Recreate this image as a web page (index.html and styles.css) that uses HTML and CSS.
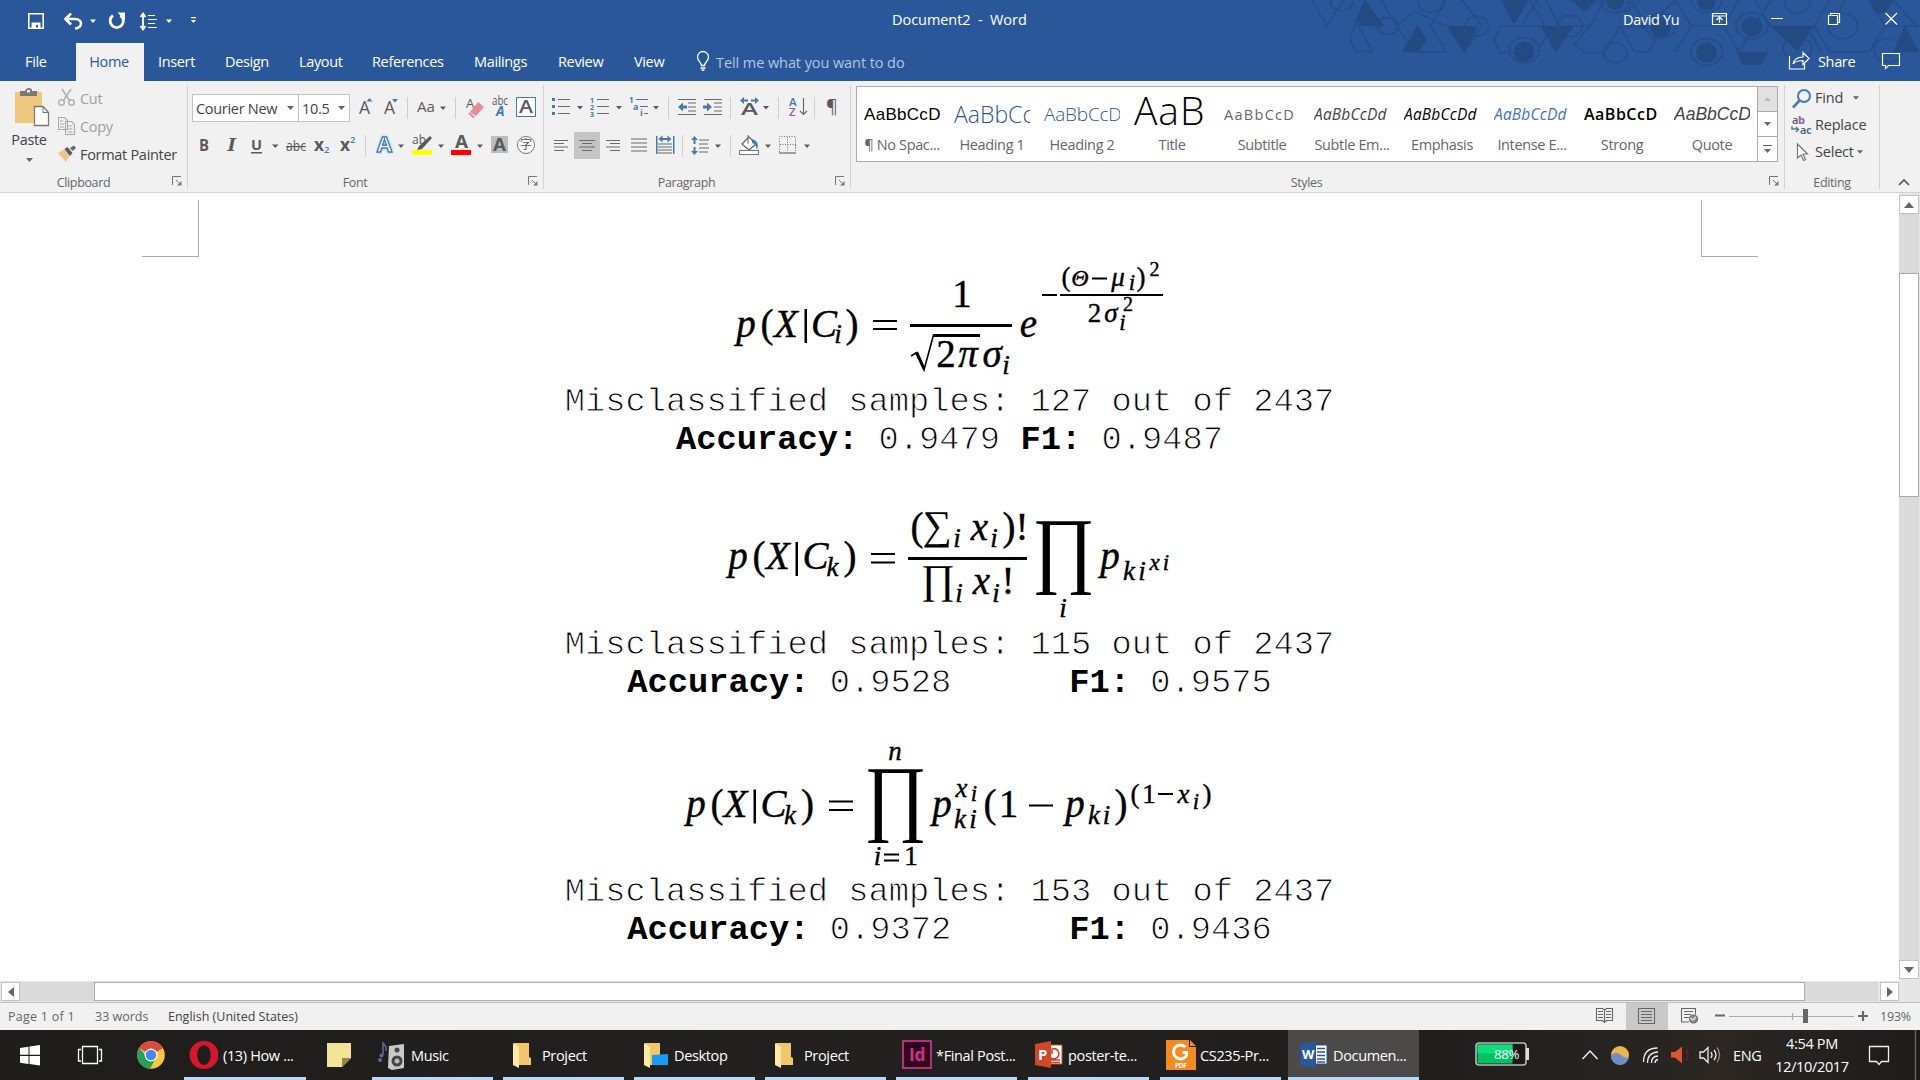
FILE: index.html
```html
<!DOCTYPE html>
<html lang="en">
<head>
<meta charset="utf-8">
<title>Document2 - Word</title>
<link rel="stylesheet" href="styles.css">
</head>
<body>
<svg class="defs" width="0" height="0">
  <symbol id="caret" viewBox="0 0 7 4"><path d="M0 0h7L3.5 4z"/></symbol>
  <symbol id="launch" viewBox="0 0 10 10"><path d="M.5 9V.5H9M4 4l4.500 4.500" fill="none" stroke="#777"/><path d="M9.500 5v4.500H5z" fill="#777"/></symbol>
  <symbol id="folder" viewBox="0 0 20 26"><path d="M1 1h15v14l2 1v7H5z" fill="#f0c869"/><path d="M0 1l6 4v21l-6-3z" fill="#ffe9a8"/></symbol>
</svg>

<header class="top">
  <svg class="pattern" viewBox="0 0 1568 243" preserveAspectRatio="none">
    <g class="pl">
      <path d="M30 0l38 78L110 0M165 0l-40 118 16 36h42l-35-76 35-42M205 0l40 78 40-40M245 78l45 78h80l-40-78M330 78L370 0M290 35l80 43M410 0l50 78-45 80M510 78h110L580 0M510 78l-20 40 15 40h45M620 0l38 78h75L770 0M560 78l40-78M600 155l40-78M733 78l-38 55 25 25h50l38-78 70 0-38-78M808 78l38 78h33l43-78M860 0l-40 40M950 0l-70 78M950 155l40-78 80 0 40 78M990 78L950 0M1070 78l40-78M1110 155l80-155M1190 78h110l40-78M1190 78l-40-78M1300 78l40 78h100l40-78 88 0M1340 78l40-78M1480 78L1440 0M1440 0l60 0 60 78M1320 156l-40-78"/>
      <circle cx="105" cy="5" r="28"/><circle cx="222" cy="78" r="26"/><circle cx="330" cy="5" r="32"/><circle cx="447" cy="78" r="30"/><circle cx="682" cy="78" r="32"/><circle cx="797" cy="158" r="30"/><circle cx="912" cy="78" r="38"/><circle cx="1028" cy="155" r="40"/><circle cx="1143" cy="78" r="40"/><circle cx="1258" cy="145" r="36"/><circle cx="1373" cy="78" r="38"/><circle cx="1488" cy="150" r="36"/><circle cx="797" cy="0" r="38"/><circle cx="1028" cy="0" r="38"/><circle cx="1258" cy="8" r="32"/><circle cx="567" cy="150" r="38"/>
    </g>
    <g class="pf">
      <path d="M165 0l48 78H155l-12-25zM298 75l22 43-20 38h-42zM370 78h80l-34 80zM508 0h70l-36 75zM608 78h86l-48 80zM685 0h68l-33 36zM850 40l30 38-15 10zM1190 78h110l-42 75zM1105 156h80l-18 38h-50zM1440 0h60l-18 38h-28zM1530 78l35 78h-66z"/>
      <ellipse cx="567" cy="155" rx="25" ry="30"/><ellipse cx="797" cy="3" rx="23" ry="26"/><ellipse cx="1028" cy="5" rx="23" ry="26"/><ellipse cx="1028" cy="158" rx="26" ry="30"/><ellipse cx="1143" cy="80" rx="26" ry="30"/><ellipse cx="912" cy="82" rx="26" ry="30"/>
    </g>
  </svg>
  <div class="titlebar">
    <svg width="220" height="36" viewBox="0 0 220 36" fill="none" stroke="#fff">
      <path d="M28.800 13.800h14.400v14.400H28.800z" stroke-width="1.600"/><path d="M31.500 22.500h9v6.500h-2.500v-4h-2v4h-4.500z" fill="#fff" stroke="none"/>
      <path d="M65 19h10c8 0 8 9 0 9.500" stroke-width="2.600"/><path d="M71 13.500l-5.500 5.500 5.500 5.500" stroke-width="2.600"/>
      <path d="M113 15.500a6.600 6.600 0 1 0 7.500 0" stroke-width="2.800"/><path d="M117.500 12.500h7.500v8z" fill="#fff" stroke="none"/>
      <path d="M143 14v15M140.500 17l2.500-3.500 2.500 3.500M140.500 26l2.500 3.500 2.500-3.500" stroke-width="1.800"/><path d="M148 15.500h7M148 19.500h9M148 23.500h7M148 27.500h9"/>
      <g fill="#fff" stroke="none"><path d="M90 19.500h6l-3 3.500zM166 19.500h6l-3 3.500zM191 17h5v1.200h-5zM191 20h5l-2.500 3z"/></g>
    </svg>
    <div class="doctitle">Document2&nbsp; -&nbsp; Word</div>
    <div class="user">David Yu</div>
    <svg width="220" height="36" viewBox="1700 0 220 36" fill="none" stroke="#fff" stroke-width="1.200">
      <path d="M1712.500 13.500h14v11h-14zM1712.500 16h14M1719.500 23v-5.500M1716.500 20l3-3 3 3M1771 18.500h12M1828.500 15.500h9v9h-9zM1830.500 15.500v-2h9v9h-2M1885.500 13l11.500 11.500M1897 13l-11.500 11.500"/>
    </svg>
  </div>
  <nav class="tabs">
    <a class="file">File</a><a class="home">Home</a><a class="t3">Insert</a><a class="t4">Design</a><a class="t5">Layout</a><a class="t6">References</a><a class="t7">Mailings</a><a class="t8">Review</a><a class="t9">View</a>
    <svg width="20" height="22" viewBox="0 0 20 22" fill="none" stroke="#fff" stroke-width="1.300"><path d="M6.500 15.500c0-3-4-4-4-8.500a5.500 5.500 0 0 1 11 0c0 4.500-4 5.500-4 8.500zM5.500 18h5M6.500 20h3"/></svg>
    <a class="tell">Tell me what you want to do</a>
    <svg width="24" height="22" viewBox="1788 51 24 22" fill="none" stroke="#fff" stroke-width="1.200"><path d="M1789.500 57v13h15v-5M1793 65c1-5 4-7 10-7v-4.500l6 6-6 6v-4c-5 0-8 1-10 3.500z"/></svg>
    <a class="share">Share</a>
    <svg width="20" height="22" viewBox="1881 51 20 22" fill="none" stroke="#fff" stroke-width="1.200"><path d="M1882.500 54.500h17v12h-11l-3 3v-3h-3z"/></svg>
  </nav>
</header>

<section class="ribbon">
  <div class="group clip">
    <div class="body">
      <div class="paste">
        <svg width="36" height="40" viewBox="14 88 36 40"><rect x="15" y="93" width="27" height="31" fill="#edc87e"/><path d="M20 97v-5h5q1-3 4-3t3 3h5v5z" fill="#777"/><rect x="27" y="91" width="3" height="2.500" fill="#f1f1f1"/><path d="M34.500 107.500h8.500l5.500 6v13h-14z" fill="#fff" stroke="#777" stroke-width="1.300"/><path d="M43 107.500v6h5.500" fill="none" stroke="#777"/></svg>
        <span>Paste</span>
        <svg width="7" height="4" fill="#666"><use href="#caret"/></svg>
      </div>
      <ul class="cmds">
        <li class="off"><svg width="18" height="20" viewBox="0 0 18 20" fill="none" stroke="#b3b3b3" stroke-width="1.600"><circle cx="3.500" cy="14.500" r="2.800"/><circle cx="13.500" cy="14.500" r="2.800"/><path d="M4 1l7.500 11.500M13 1L5.500 12.500"/></svg>Cut</li>
        <li class="off"><svg width="18" height="20" viewBox="0 0 18 20" fill="#f1f1f1" stroke="#a9a9a9" stroke-width="1.100"><path d="M.5 1.500h6l3 3v9h-9zM7.500 5.500h6l3 3v10h-9z"/><path d="M2 5h3M2 8h4M2 11h4M9.500 10h5M9.500 13h5M9.500 16h5"/></svg>Copy</li>
        <li><svg width="18" height="20" viewBox="0 0 18 20"><path d="M0 9l7-4 5 6-4 7z" fill="#ecc68a"/><path d="M6.500 5l3-2 5 6-2.500 3z" fill="#5a5a5a"/><path d="M12 4l4-2.500 2 2.500-3.500 3z" fill="#666"/></svg>Format Painter</li>
      </ul>
    </div>
    <div class="foot"><span>Clipboard</span><svg width="10" height="10"><use href="#launch"/></svg></div>
  </div>

  <div class="group font">
    <div class="row r1">
      <div class="combo name">Courier New<svg width="7" height="4"><use href="#caret"/></svg></div>
      <div class="combo size">10.5<svg width="7" height="4"><use href="#caret"/></svg></div>
      <svg width="192" height="28" viewBox="351 94 192 28" class="gl">
        <text x="359" y="114" font-size="17.500">A</text><path class="b" d="M366.500 101.500h6l-3-3.500z"/><text x="384" y="114" font-size="17.500">A</text><path class="b" d="M392 99h6l-3 3.500z"/>
        <path class="sp" d="M407.500 97v22M455.500 97v22"/><text x="417" y="112" font-size="15" textLength="18" lengthAdjust="spacingAndGlyphs">Aa</text><path d="M440 106.500h6l-3 3.500z"/>
        <text x="466" y="108" font-size="13">A</text><path d="M470 112l8-10 6 5-8 9z" fill="#e8899a"/><path d="M469 113l5 4.500" stroke="#e8899a" stroke-width="2"/>
        <text x="492" y="105" font-size="12" textLength="16" lengthAdjust="spacingAndGlyphs">abc</text><text x="496" y="116" font-size="13.500" class="b" font-weight="700" font-style="italic">A</text>
        <rect x="516.500" y="97.500" width="19" height="19" fill="#fff" stroke="#4479b3"/><text x="519" y="113" font-size="18" font-weight="600" textLength="14" lengthAdjust="spacingAndGlyphs">A</text>
      </svg>
    </div>
    <div class="row r2">
      <svg width="351" height="28" viewBox="192 132 351 28" class="gl">
        <text x="199" y="151" font-size="16" font-weight="700" textLength="10" lengthAdjust="spacingAndGlyphs">B</text><text x="227" y="151" font-size="18" font-weight="700" class="serif" font-style="italic" textLength="9" lengthAdjust="spacingAndGlyphs">I</text><text x="251" y="150" font-size="15" font-weight="700" textLength="11" lengthAdjust="spacingAndGlyphs">U</text><path d="M251 152h11v1.500h-11zM272 144.500h6.500l-3.200 3.500z"/>
        <text x="286" y="151" font-size="14" textLength="20" lengthAdjust="spacingAndGlyphs">abc</text><path d="M286 146h20v1.200h-20z"/>
        <text x="314" y="151" font-size="17" font-weight="700" textLength="10" lengthAdjust="spacingAndGlyphs">x</text><text x="324" y="153" font-size="9.500" class="b" font-weight="600">2</text><text x="340" y="151" font-size="17" font-weight="700" textLength="10" lengthAdjust="spacingAndGlyphs">x</text><text x="350" y="143" font-size="9.500" class="b" font-weight="600">2</text>
        <path class="sp" d="M365.500 135v22"/><text x="377" y="152" font-size="21" font-weight="700" textLength="15" lengthAdjust="spacingAndGlyphs" class="fx">A</text><path d="M398 144.500h6l-3 3.500z"/>
        <text x="412" y="144" font-size="13" textLength="14" lengthAdjust="spacingAndGlyphs">ab</text><path d="M430 136l2 2-10 11-5 1 2-4z"/><rect x="412" y="150" width="20" height="5" fill="#ff0"/><path d="M438 144.500h6l-3 3.500z"/>
        <text x="455" y="148" font-size="17" font-weight="700" textLength="13" lengthAdjust="spacingAndGlyphs">A</text><rect x="451" y="150" width="20" height="5" fill="red"/><path d="M477 144.500h6l-3 3.500z"/>
        <rect x="491" y="136" width="17" height="17" fill="#bdbdbd"/><text x="493" y="151" font-size="18" font-weight="700" textLength="13" lengthAdjust="spacingAndGlyphs">A</text>
        <circle cx="526" cy="145" r="8.500" fill="#fff" stroke="#777"/><text x="520" y="149" font-size="12" class="cjk">字</text>
      </svg>
    </div>
    <div class="foot"><span>Font</span><svg width="10" height="10"><use href="#launch"/></svg></div>
  </div>

  <div class="group para">
    <div class="row r1">
      <svg width="304" height="28" viewBox="544 94 304 28" class="gl">
        <g class="b"><rect x="552" y="98" width="3" height="3"/><rect x="552" y="105" width="3" height="3"/><rect x="552" y="112" width="3" height="3"/><text x="590" y="103" font-size="7" font-weight="700">1</text><text x="590" y="110" font-size="7" font-weight="700">2</text><text x="590" y="117" font-size="7" font-weight="700">3</text><text x="629" y="103" font-size="8" font-weight="700">1</text><text x="633" y="110" font-size="9" font-weight="700">a</text><text x="640" y="116" font-size="9" font-weight="700">i</text></g>
        <path class="ln" d="M558 99.500h12M558 106.500h12M558 113.500h12M597 99.500h12M597 106.500h12M597 113.500h12M636 99.500h12M640 106.500h8M644 113.500h4"/>
        <path d="M577 106h6l-3 3.500zM616 106h6l-3 3.500zM653 106h6l-3 3.500zM763 106h6l-3 3.500z"/>
        <path class="sp" d="M668.500 97v22M730.500 97v22M778.500 97v22M814.500 97v22"/>
        <path class="ln" d="M678 99.500h18M688 103h8M688 107h8M688 111h8M678 114.500h18M704 99.500h18M714 103h8M714 107h8M714 111h8M704 114.500h18"/>
        <path class="b" d="M678 107l5-4.500v3h4v3h-4v3zM712 107l-5-4.500v3h-4v3h4v3zM740 100.500l4-3.500v2.500h4v2h-4v2.500zM759 100.500l-4-3.500v2.500h-4v2h4v2.500z"/>
        <text x="741" y="115" font-size="15.500" font-weight="600" textLength="17" lengthAdjust="spacingAndGlyphs">A</text>
        <text x="789" y="106" font-size="11.500" class="b" font-weight="600">A</text><text x="789" y="116" font-size="11.500" font-weight="600" class="pu">Z</text><path class="ln" d="M803.500 98v16M800 111l3.500 3.500 3.500-3.500"/>
        <text x="826" y="113" font-size="18">¶</text>
      </svg>
    </div>
    <div class="row r2">
      <svg width="304" height="28" viewBox="544 132 304 28" class="gl">
        <rect x="574" y="132" width="26" height="27" fill="#c5c5c5"/>
        <path class="ln" d="M554 140.500h14M554 143.500h10M554 147h14M554 150.500h10M579 140.500h16M582 143.500h10M579 147h16M582 150.500h10M606 140.500h14M610 143.500h10M606 147h14M610 150.500h10M631 139h16M631 143h16M631 147h16M631 151h16M658 144h14M658 147h14M658 150h14M658 153h14M699 140h10M699 144h9M699 148h10M699 152h9"/>
        <path class="b" d="M656 136h1.500v18h-1.500zM673 136h1.500v18h-1.500zM658.500 139l4-3.500v2.500h5v-2.500l4 3.500-4 3.500V140h-5v2.500zM694.500 136l3.500 4h-2.500v4h-2v-4H691zM694.500 155l3.500-4h-2.500v-4h-2v4H691z"/>
        <path class="sp" d="M682.500 135v22M730.500 135v22"/><path d="M715 144.500h6l-3 3.500zM765 144.500h6l-3 3.500zM804 144.500h6l-3 3.500z"/>
        <path d="M742 144l7-7 7 7-7 6z" fill="#fff" stroke="#666" stroke-width="1.300"/><path d="M748 144v-9" stroke="#666"/><path class="b" d="M752 139q8 2 5 11-1-6-5-7z"/><rect x="739.500" y="150.500" width="19" height="4" fill="#fff" stroke="#777"/>
        <path d="M779.500 152v-15.500h16V152M787.500 137v15M780 144.500h16" fill="none" stroke="#777" stroke-dasharray="1 1.500"/><path class="ln" d="M779 153h17"/>
      </svg>
    </div>
    <div class="foot"><span>Paragraph</span><svg width="10" height="10"><use href="#launch"/></svg></div>
  </div>

  <div class="group styles">
    <div class="gallery">
      <div class="st"><b class="s1">AaBbCcD</b><span>¶ No Spac...</span></div>
      <div class="st"><b class="s2">AaBbCc</b><span>Heading 1</span></div>
      <div class="st"><b class="s3">AaBbCcD</b><span>Heading 2</span></div>
      <div class="st"><b class="s4">AaB</b><span>Title</span></div>
      <div class="st"><b class="s5">AaBbCcD</b><span>Subtitle</span></div>
      <div class="st"><b class="s6">AaBbCcDd</b><span>Subtle Em...</span></div>
      <div class="st"><b class="s7">AaBbCcDd</b><span>Emphasis</span></div>
      <div class="st"><b class="s8">AaBbCcDd</b><span>Intense E...</span></div>
      <div class="st"><b class="s9">AaBbCcD</b><span>Strong</span></div>
      <div class="st"><b class="s10">AaBbCcD</b><span>Quote</span></div>
      <div class="pager">
        <i class="dim"><svg width="7" height="4" viewBox="0 0 7 4"><path d="M0 4h7L3.500 0z" fill="#bbb"/></svg></i>
        <i><svg width="7" height="4" fill="#666"><use href="#caret"/></svg></i>
        <i><svg width="9" height="9" viewBox="0 0 9 9" fill="#666"><path d="M0 0h9v1H0zM1 4h7L4.500 8z"/></svg></i>
      </div>
    </div>
    <div class="foot"><span>Styles</span><svg width="10" height="10"><use href="#launch"/></svg></div>
  </div>

  <div class="group edit">
    <ul class="cmds">
      <li><svg width="24" height="22" viewBox="1791 86 24 22" fill="none" stroke="#4479b3" stroke-width="2"><circle cx="1804" cy="95" r="6"/><path d="M1799.500 99.500l-6.500 7" stroke-width="2.600"/></svg>Find<svg class="c1" width="6" height="4" fill="#666"><use href="#caret"/></svg></li>
      <li><svg width="24" height="22" viewBox="0 0 24 22" class="gl"><text x="1" y="10" font-size="11" font-weight="600">a</text><text x="7" y="10" font-size="11" font-weight="700" class="pu">b</text><text x="9" y="20" font-size="11" font-weight="600">a</text><text x="15" y="20" font-size="11" font-weight="700" class="b">c</text><path d="M1 12v3h6M5 13l2.500 2.500L5 18" fill="none" stroke="#4479b3" stroke-width="1.400"/></svg>Replace</li>
      <li><svg width="24" height="22" viewBox="0 0 24 22" fill="#fff" stroke="#777" stroke-width="1.200"><path d="M6.500 3v14l3.500-3 2.500 5.500 2-1-2.500-5.500h4.500z"/></svg>Select<svg class="c2" width="6" height="4" fill="#666"><use href="#caret"/></svg></li>
    </ul>
    <div class="foot"><span>Editing</span></div>
  </div>
  <svg class="collapse" width="12" height="8" viewBox="0 0 12 8" fill="none" stroke="#555" stroke-width="1.600"><path d="M1 7l5-5 5 5"/></svg>
</section>

<main class="workspace">
  <article class="page">
    <div class="marks"><i class="ml"></i><i class="mr"></i></div>

    <svg class="eq e1" viewBox="600 257 700 126">
      <g class="it"><text x="746" y="337">p</text><text x="786" y="337">X</text><text x="824" y="337">C</text><text x="838" y="343" class="sm">i</text><text x="968" y="367">π</text><text x="992" y="367">σ</text><text x="1006" y="374" class="sm">i</text><text x="1028.500" y="337">e</text><text x="1080" y="286" class="th">Θ</text><text x="1118" y="286" class="sm">μ</text><text x="1132" y="290" class="xi">i</text><text x="1111" y="322" class="sm">σ</text><text x="1122.500" y="330" class="xi">i</text></g>
      <g class="up"><text x="767" y="337">(</text><text x="852" y="337">)</text><text x="962" y="307">1</text><text x="946" y="367">2</text><text x="1066" y="286" class="sm">(</text><text x="1141" y="286" class="sm">)</text><text x="1154.500" y="276" class="xs">2</text><text x="1094.500" y="322" class="sm">2</text><text x="1128" y="311" class="xs">2</text></g>
      <path d="M804.500 309h2.500v34h-2.500zM873 320h24v2h-24zM873 328h24v2h-24zM910 324h102v3H910zM933 334h47v3H933zM1042 294h15v2h-15zM1060 294h103v2h-103zM1092 277.500h15v2h-15z"/>
      <path d="M911 356l5-3 8 17 9.500-35" fill="none" stroke="#000" stroke-width="1.600"/><path d="M915 353l3-1.500 6.500 15-1 4z"/>
    </svg>
    <p>Misclassified samples: 127 out of 2437</p>
    <p><strong>Accuracy:</strong> 0.9479 <strong>F1:</strong> 0.9487</p>

    <svg class="eq e2" viewBox="600 459 700 166.500">
      <g class="it"><text x="738" y="569">p</text><text x="778" y="569">X</text><text x="815.500" y="569">C</text><text x="832.500" y="576" class="sm">k</text><text x="957" y="547" class="sm">i</text><text x="979.500" y="540">x</text><text x="994" y="547" class="sm">i</text><text x="959" y="602" class="sm">i</text><text x="981.500" y="594">x</text><text x="996" y="602" class="sm">i</text><text x="1063" y="617" class="sm">i</text><text x="1110" y="569">p</text><text x="1129" y="580" class="sm">k</text><text x="1142" y="580" class="sm">i</text><text x="1154.500" y="570" class="xi">x</text><text x="1166" y="570" class="xi">i</text></g>
      <g class="up"><text x="759" y="569">(</text><text x="850" y="569">)</text><text x="917" y="540">(</text><text x="1009" y="540">)</text><text x="1022" y="540">!</text><text x="1008" y="594">!</text></g>
      <g class="op"><text x="937" y="539">∑</text><text x="938" y="593">∏</text><text x="1063.500" y="577" class="big" textLength="63" lengthAdjust="spacingAndGlyphs">∏</text></g>
      <path d="M795.500 542h2.500v34h-2.500zM871 553h24v2h-24zM871 561.500h24v2h-24zM908 557h119v3H908z"/>
    </svg>
    <p>Misclassified samples: 115 out of 2437</p>
    <p><strong>Accuracy:</strong> 0.9528<strong class="tab">F1:</strong> 0.9575</p>

    <svg class="eq e3" viewBox="600 701.500 700 171">
      <g class="it"><text x="696" y="816">p</text><text x="735.500" y="816">X</text><text x="773.500" y="816">C</text><text x="790" y="823" class="sm">k</text><text x="895" y="759" class="sm">n</text><text x="877.500" y="864" class="sm">i</text><text x="942" y="816">p</text><text x="961.500" y="796" class="sm">x</text><text x="974" y="800" class="xi">i</text><text x="960" y="827" class="sm">k</text><text x="973" y="827" class="sm">i</text><text x="1075" y="816">p</text><text x="1094" y="823" class="sm">k</text><text x="1106.500" y="823" class="sm">i</text><text x="1183.500" y="802" class="sm">x</text><text x="1196" y="808" class="xi">i</text></g>
      <g class="up"><text x="717" y="816">(</text><text x="807.500" y="816">)</text><text x="911" y="864" class="sm">1</text><text x="990" y="816">(</text><text x="1008.500" y="816">1</text><text x="1121" y="816">)</text><text x="1135" y="802" class="sm">(</text><text x="1149" y="802" class="sm">1</text><text x="1207" y="802" class="sm">)</text></g>
      <g class="op"><text x="895.500" y="824" class="big" textLength="63" lengthAdjust="spacingAndGlyphs">∏</text></g>
      <path d="M753.500 789h2.500v34h-2.500zM829 800h24v2h-24zM829 808.500h24v2h-24zM884 853h15v2h-15zM884 859h15v2h-15zM1029 804h24v2h-24zM1158 792.500h15v2h-15z"/>
    </svg>
    <p>Misclassified samples: 153 out of 2437</p>
    <p><strong>Accuracy:</strong> 0.9372<strong class="tab">F1:</strong> 0.9436</p>
  </article>
  <aside class="vbar">
    <i class="btn"><svg width="10" height="6" viewBox="0 0 10 6"><path d="M0 6h10L5 0z" fill="#666"/></svg></i>
    <i class="track"></i><i class="vthumb"></i><i class="track rest"></i>
    <i class="btn"><svg width="10" height="6" viewBox="0 0 10 6"><path d="M0 0h10L5 6z" fill="#666"/></svg></i>
  </aside>
</main>

<div class="hbar">
  <i class="btn"><svg width="6" height="10" viewBox="0 0 6 10"><path d="M6 0v10L0 5z" fill="#666"/></svg></i>
  <i class="gap1"></i><i class="hthumb"></i><i class="gap2"></i>
  <i class="btn"><svg width="6" height="10" viewBox="0 0 6 10"><path d="M0 0v10l6-5z" fill="#666"/></svg></i>
</div>

<footer class="status">
  <span class="w1">Page 1 of 1</span><span class="w2">33 words</span><span class="w3">English (United States)</span>
  <svg width="300" height="27" viewBox="1580 1003 300 27" fill="none" stroke="#666" stroke-width="1.100">
    <rect x="1626" y="1003" width="42" height="27" fill="#c9c9c9" stroke="none"/>
    <path d="M1596.500 1008.500h6l2 1.500 2-1.500h6v12h-6l-2 2-2-2h-6zM1604.500 1010v12M1598 1011.500h5M1598 1014.500h5M1598 1017.500h5M1606 1011.500h5M1606 1014.500h5M1606 1017.500h5M1638.500 1008.500h16v15h-16zM1641 1011.500h11M1641 1014.500h11M1641 1017.500h11M1641 1020.500h11M1689 1022h-7.500v-13.500h14v6M1684 1011.500h9M1684 1014.500h7M1684 1017.500h5"/><circle cx="1693.500" cy="1019" r="4" fill="#888"/><path d="M1690 1018l3 2 3-3" stroke="#eee"/>
    <path d="M1715 1015.500h10M1858 1016h10M1863 1011v10" stroke-width="2.200"/><path d="M1729 1016.500h125M1792.500 1013v7" stroke="#aaa"/><rect x="1803" y="1009" width="5" height="14" fill="#666" stroke="none"/>
  </svg>
  <span class="pct">193%</span>
</footer>

<footer class="taskbar">
  <svg width="184" height="50" viewBox="0 1030 184 50"><path d="M20 1048l8.500-1.300v8H20zM29.500 1046.500l10.500-1.500v9.700H29.500zM20 1056h8.500v8L20 1062.700zM29.500 1056H40v9.500l-10.500-1.500z" fill="#fff"/><path d="M82.500 1046.500h15v17h-15zM81 1049.500h-2.500v11.500H81M99 1049.500h2.500v11.500H99" fill="none" stroke="#fff" stroke-width="1.300"/>
    <circle cx="151" cy="1055" r="13.800" fill="#f9c938"/><path d="M151 1055L139 1048a13.800 13.800 0 0 1 24 0z" fill="#d94b3d"/><path d="M139 1048a13.800 13.800 0 0 0 11 20.800l6-11-8 0z" fill="#24a05a"/><circle cx="151" cy="1055" r="6.500" fill="#fff"/><circle cx="151" cy="1055" r="5.300" fill="#4587f3"/></svg>
  <div class="task a1"><svg width="34" height="30" viewBox="0 0 34 30"><path fill-rule="evenodd" d="M20 1a14.500 14 0 1 0 0 28a14.500 14 0 1 0 0-28zM20 5c9 1 9 19 0 20c-9-1-9-19 0-20z" fill="#d8152a"/></svg>(13) How ...</div>
  <svg class="note" width="24" height="24" viewBox="0 0 24 24"><path d="M0 0h24v15l-9 9H0z" fill="#f3e497"/><path d="M24 15h-9v9z" fill="#8d8652"/></svg>
  <div class="task a2"><svg width="34" height="30" viewBox="0 0 34 30"><path d="M17 6l15-2v24l-12 2-4-2z" fill="#c9c9c9"/><circle cx="25" cy="21" r="5.500" fill="#444"/><circle cx="25" cy="21" r="2.500" fill="#bbb"/><circle cx="25" cy="10" r="2.500" fill="#444"/><path d="M11 15V3l3 4v4" fill="none" stroke="#5d6b90" stroke-width="1.500"/><circle cx="9.500" cy="15.500" r="2" fill="#5d6b90"/><circle cx="8" cy="20" r="2" fill="#5d6b90"/></svg>Music</div>
  <div class="task f"><svg width="20" height="26"><use href="#folder"/></svg>Project</div>
  <div class="task d"><svg width="26" height="26" viewBox="0 0 26 26"><path d="M1 1h15v14l2 1v7H5z" fill="#f0c869"/><path d="M0 1l6 4v21l-6-3z" fill="#ffe9a8"/><path d="M8 13l16-1v11H8z" fill="#169cf5"/></svg>Desktop</div>
  <div class="task f"><svg width="20" height="26"><use href="#folder"/></svg>Project</div>
  <div class="task g"><svg width="31" height="30" viewBox="0 0 31 30"><rect x="1" y="1" width="28" height="27" fill="#2e0219" stroke="#d63a96" stroke-width="1.600"/><text x="7" y="21" font-size="17" font-weight="700" fill="#cf2f8c" textLength="16" lengthAdjust="spacingAndGlyphs">Id</text></svg>*Final Post...</div>
  <div class="task g"><svg width="31" height="30" viewBox="0 0 31 30"><path d="M14 5h14v19H14z" fill="#fff" stroke="#d24726"/><path d="M18 14v-5a5 5 0 1 1-2 8M17 20h9M17 22.500h9" fill="none" stroke="#d24726" stroke-width="1.600"/><path d="M1 4l16-3v27L1 25z" fill="#d24726"/><text x="4" y="20" font-size="15" font-weight="700" fill="#fff">P</text></svg>poster-te...</div>
  <div class="task g"><svg width="31" height="30" viewBox="0 0 31 30"><path d="M0 0h23v7h7v23H0z" fill="#f58a1f"/><path d="M24 0l6 6h-6z" fill="#f58a1f"/><path d="M19.500 7a7 7 0 1 0 1 8.500v-3h-4" fill="none" stroke="#fff" stroke-width="3"/><text x="9" y="28" font-size="6.500" font-weight="700" fill="#fff">PDF</text></svg>CS235-Pr...</div>
  <div class="task g on"><svg width="31" height="30" viewBox="0 0 31 30"><path d="M14 5h13v19H14z" fill="#fff" stroke="#2b579a"/><path d="M17 8.500h8M17 12h8M17 15.500h8M17 19h8M17 22h8" stroke="#2b579a" stroke-width="1.400"/><path d="M0 4l16-3v27L0 25z" fill="#2b579a"/><text x="2" y="19" font-size="13" font-weight="700" fill="#fff" textLength="12" lengthAdjust="spacingAndGlyphs">W</text></svg>Documen...</div>
  <svg width="306" height="50" viewBox="1420 1030 306 50" fill="none" stroke="#eee" stroke-width="1.300">
    <rect x="1476" y="1043" width="50" height="22" rx="3" fill="#1a1a1a" stroke="#bbb" stroke-width="1.600"/><rect x="1477.500" y="1044.500" width="35" height="19" fill="#00c265" stroke="none"/><rect x="1477.500" y="1044.500" width="35" height="9" fill="#0ae07a" stroke="none"/><rect x="1526" y="1048" width="3" height="12" fill="#ddd" stroke="none"/><text x="1494" y="1059" font-size="13" fill="#fff" stroke="none" textLength="25" lengthAdjust="spacingAndGlyphs">88%</text>
    <path d="M1582.500 1059l7.500-8 7.500 8" stroke-width="1.500"/><circle cx="1620" cy="1055" r="9" fill="#f2b350" stroke="none"/><path d="M1611 1055q6-4 10 0t8 2a9 9 0 0 1-18-2z" fill="#6f8fc4" stroke="none"/>
    <path d="M1643.500 1062q0-14 14-14M1647.500 1063q0-10.500 10.500-11M1651.500 1063q0-7 6.500-7M1655 1063q0-3 3-3.500"/>
    <path d="M1671 1052h4l7-5.500v17l-7-6h-4z" fill="#e0532f" stroke="none"/><path d="M1686 1049q4 6 0 12" stroke="#6b2417"/>
    <path d="M1700 1052h3.500l4.500-4.500v15l-4.500-4.500h-3.500zM1711 1052q2 3 0 6M1714 1050q4 5 0 10"/><path d="M1717 1047.500q5 7 0 15" stroke="#888"/>
  </svg>
  <span class="eng">ENG</span>
  <div class="clock"><span>4:54 PM</span><span>12/10/2017</span></div>
  <svg width="54" height="50" viewBox="1866 1030 54 50" fill="none" stroke="#eee" stroke-width="1.300"><path d="M1869.500 1046.500h19v15h-7l-2.500 3-2.500-3h-7z"/><path d="M1915.500 1030v50" stroke="#666"/></svg>
</footer>
</body>
</html>
```
FILE: styles.css
```css
* { box-sizing: border-box; }
body {
  margin: 0;
  width: 1920px;
  height: 1080px;
  overflow: hidden;
  display: flex;
  flex-direction: column;
  font-family: "Open Sans", "Noto Sans", sans-serif;
  font-size: 14.5px;
  letter-spacing: -0.35px;
  color: #444;
  background: #fff;
}
svg { flex: none; display: block; }
.defs { position: absolute; }
ul { list-style: none; margin: 0; padding: 0; }
i, b { font-style: normal; font-weight: 400; }

/* title bar and tabs */
.top { position: relative; height: 81px; background: #2a579a; color: #fff; flex: none; }
.pattern { position: absolute; right: 0; top: 0; width: 620px; height: 81px; }
.pl { fill: none; stroke: #254e8b; stroke-width: 5; }
.pf { fill: #244a84; }
.titlebar { position: relative; display: flex; height: 38px; }
.doctitle { width: 1403px; padding-left: 672px; line-height: 40px; letter-spacing: -0.05px; }
.user { width: 77px; line-height: 40px; }
.tabs { position: relative; display: flex; align-items: center; height: 43px; padding-top: 5px; }
.tabs a { line-height: 38px; height: 38px; white-space: nowrap; }
.tabs svg { margin-bottom: 2px; }
.file { width: 76px; padding-left: 25px; }
.home { width: 68px; padding-right: 2px; text-align: center; background: #f1f1f1; color: #2a579a; margin-right: 14px; }
.t3 { width: 67px; }
.t4 { width: 74px; }
.t5 { width: 73px; }
.t6 { width: 102px; }
.t7 { width: 84px; }
.t8 { width: 76px; }
.t9 { width: 61px; }
.tabs .tell { width: 1073px; padding-left: 1px; color: #b4c6e0; letter-spacing: -0.08px; padding-top: 1px; }
.share { width: 69px; padding-left: 6px; }

/* ribbon */
.ribbon { display: flex; height: 112px; flex: none; background: #f1f1f1; border-bottom: 1px solid #d2d2d2; padding-top: 4px; }
.group { height: 104px; border-right: 1px solid #d2d2d2; display: flex; flex-direction: column; }
.foot { margin-top: auto; height: 16px; display: flex; align-items: center; font-size: 12.5px; color: #666; padding: 0 5px 0 0; }
.foot span { flex: 1; text-align: center; position: relative; top: 1px; }
.clip .foot span { padding-right: 5px; }
.font .foot span { padding-right: 10px; }
.para .foot span { padding-right: 6px; }
.styles .foot span { padding-right: 12px; }
.edit .foot { padding: 0; }
.clip { width: 188px; }
.font { width: 356px; padding-left: 4px; }
.para { width: 307px; }
.styles { width: 934px; padding-left: 5px; }
.edit { width: 95px; }
.body { display: flex; }
.paste { width: 44px; margin-left: 7px; padding-top: 2px; display: flex; flex-direction: column; align-items: center; margin-right: 7px; }
.paste svg:first-child { margin-left: 6px; }
.paste span { line-height: 26px; }
.paste svg:last-child { margin-top: 5px; }
.cmds { margin-top: -1px; }
.cmds li { display: flex; align-items: center; height: 28px; white-space: nowrap; letter-spacing: -0.3px; }
.clip .cmds li { gap: 4px; }
.clip .cmds li.off { color: #a0a0a0; }
.edit .cmds { padding: 0 0 0 6px; }
.edit .cmds li { height: 27px; letter-spacing: -0.2px; }
.c1 { margin-left: 10px; }
.c2 { margin-left: 3px; }
.row { display: flex; height: 28px; }
.r1 { margin-top: 9px; }
.r2 { margin-top: 10px; }
.combo { border: 1px solid #c3c3c3; background: #fff; height: 28px; display: flex; align-items: center; justify-content: space-between; padding: 0 4px 0 3px; color: #444; letter-spacing: -.3px; }
.combo svg { fill: #666; }
.combo.name { width: 107px; }
.combo.size { width: 52px; margin-left: -1px; margin-right: 1px; }
.gl { fill: #5a5a5a; letter-spacing: 0; }
.gl .b { fill: #4479b3; }
.gl .pu { fill: #9459b8; }
.gl .sp { stroke: #d0d0d0; fill: none; }
.gl .ln { stroke: #6a6a6a; fill: none; stroke-width: 1.2; }
.gl .fx { fill: #fff; stroke: #3f7fc4; stroke-width: 1.3; filter: drop-shadow(0 0 1px #8fbdf0); }
.serif { font-family: "Liberation Serif", serif; }
.cjk { font-family: "Noto Sans CJK SC", sans-serif; }
.gallery { display: flex; height: 76px; margin-top: 1px; width: 922px; background: #fff; border: 1px solid #ababab; }
.st { width: 90px; padding: 0 7px; display: flex; flex-direction: column; }
.st b { display: block; height: 44px; line-height: 55px; width: 76px; overflow: hidden; white-space: nowrap; }
.st span { text-align: center; color: #666; line-height: 30px; margin-top: -1px; white-space: nowrap; font-size: 14.5px; }
.s1 { font-family: "Liberation Sans", sans-serif; font-size: 17px; color: #000; }
.s2, .s3, .s4 { font-weight: 300; color: #2f5597; }
.st .s1 { letter-spacing: 0.3px; }
.st .s2 { font-weight: 300; font-size: 23px; letter-spacing: 0; }
.st .s3 { font-weight: 300; font-size: 19px; letter-spacing: -0.2px; }
.st .s4 { font-weight: 300; font-size: 39px; color: #000; line-height: 31px; letter-spacing: 0.9px; margin-top: 7px; height: 37px; }
.s5 { font-size: 14.5px; color: #666; letter-spacing: 1.3px; }
.s6, .s7, .s8 { font-style: italic; font-size: 15.5px; letter-spacing: 0.2px; }
.s7 { color: #000; }
.s8 { color: #4472c4; }
.st .s9 { font-weight: 600; color: #000; font-size: 16px; letter-spacing: 0.5px; }
.s10 { font-style: italic; font-size: 17.5px; font-family: "Liberation Sans", sans-serif; letter-spacing: 0; }
.pager { width: 20px; border-left: 1px solid #ababab; display: flex; flex-direction: column; }
.pager i { flex: 1; display: flex; align-items: center; justify-content: center; }
.pager i + i { border-top: 1px solid #ababab; }
.pager .dim { background: #e1e1e1; }
.collapse { margin: 93px 0 0 18px; }

/* document */
.workspace { display: flex; height: 788px; flex: none; }
.page { width: 1899px; background: #fff; color: #000; display: flex; flex-direction: column; align-items: center; overflow: hidden; }
.marks { align-self: stretch; height: 64px; flex: none; display: flex; justify-content: space-between; padding: 7px 141px 0 142px; }
.marks i { width: 57px; height: 57px; border-bottom: 1px solid #ababab; }
.ml { border-right: 1px solid #ababab; }
.mr { border-left: 1px solid #ababab; }
.page p { margin: 0; height: 38px; line-height: 38px; font-family: "Liberation Mono", monospace; font-size: 33.75px; letter-spacing: 0; white-space: pre; -webkit-text-stroke: 0.9px #fff; }
.page strong { -webkit-text-stroke: 0; }
.tab { margin-left: 118px; }
.eq { width: 700px; overflow: visible; letter-spacing: 0; text-anchor: middle; }
.e1 { height: 126px; }
.e2 { height: 166.5px; }
.e3 { height: 171px; }
.eq text { font-family: "Liberation Serif", serif; font-size: 39px; stroke: #000; stroke-width: .4; }
.eq .it text { font-style: italic; }
.eq text.sm { font-size: 27px; }
.eq text.xs { font-size: 20px; }
.eq text.xi { font-size: 23px; }
.eq text.th { font-size: 24px; }
.eq .op text { font-size: 41px; stroke: none; }
.eq .op text.big { font-size: 85px; }

/* scroll bars */
.vbar { width: 21px; background: #e6e6e6; padding: 2px 1px 2px 0; display: flex; flex-direction: column; }
.btn { background: #fff; border: 1px solid #c3c3c3; display: flex; align-items: center; justify-content: center; flex: none; }
.vbar .btn { height: 19px; }
.track { height: 59px; background: #dadada; }
.track.rest { flex: 1; height: auto; }
.vthumb { height: 224px; background: #fff; border: 1px solid #ababab; }
.hbar { height: 22px; flex: none; display: flex; padding: 1px 21px 1px 1px; background: #e6e6e6; border-bottom: 1px solid #c0c0c0; }
.hbar .btn { width: 19px; }
.gap1 { width: 74px; background: #dadada; }
.hthumb { width: 1711px; background: #fff; border: 1px solid #ababab; }
.gap2 { flex: 1; background: #dadada; margin-right: 2px; }

/* status bar */
.status { height: 27px; flex: none; display: flex; background: #f1f1f1; padding-left: 8px; line-height: 27px; font-size: 12.5px; color: #666; letter-spacing: 0; }
.w1 { width: 87px; letter-spacing: .25px; }
.w2 { width: 73px; }
.w3 { width: 1412px; color: #444; }
.pct { letter-spacing: -.2px; }

/* taskbar */
.taskbar { height: 50px; flex: none; display: flex; color: #fff; line-height: 51px; background: linear-gradient(90deg, #1e1d1c, #222120 40%, #201f1e 75%, #2b2622 90%, #1d1c1b); }
.task { display: flex; align-items: center; width: 121px; height: 50px; margin-right: 10px; border-bottom: 3px solid #b3dcfb; white-space: nowrap; padding-top: 3px; }
.a1 { width: 122px; gap: 5px; margin-right: 21px; }
.a2 { gap: 5px; }
.note { margin: 13px 21px 0 0; }
.f { padding-left: 10px; gap: 9px; }
.d { padding-left: 10px; gap: 4px; }
.g { padding-left: 6px; gap: 3px; margin-right: 11px; }
.g.on { width: 131px; padding-left: 12px; gap: 2px; background: #4b4a49; margin-left: -4px; margin-right: 1px; }
.eng { width: 40px; padding-left: 7px; }
.clock { width: 100px; display: flex; flex-direction: column; align-items: center; line-height: 23px; padding-top: 2px; padding-right: 8px; }
```
